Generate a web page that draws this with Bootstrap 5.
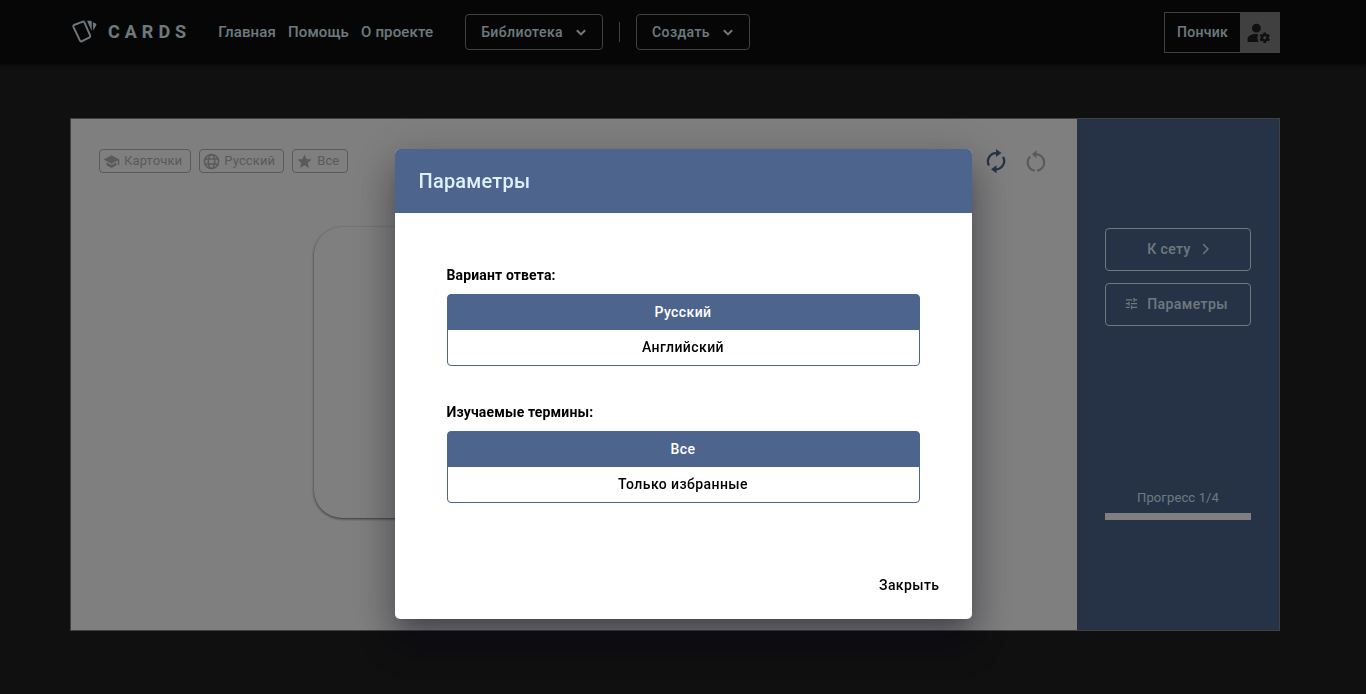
<!DOCTYPE html>
<html lang="ru">
<head>
<meta charset="utf-8">
<meta name="viewport" content="width=device-width, initial-scale=1">
<title>Cards</title>
<link href="https://cdn.jsdelivr.net/npm/bootstrap@5.3.0/dist/css/bootstrap.min.css" rel="stylesheet">
<style>
  :root { --brand: #4d648d; --ice: #dcf1fb; --scrollbar: 16px; }
  body { font-family: Roboto, "Noto Sans", sans-serif; font-size: 14px; background: #202020; padding-right: var(--scrollbar); overflow: hidden; }
  svg { fill: currentColor; flex: none; display: block; }
  .topbar { min-height: 64px; background: #0c0c0c; margin-right: calc(-1 * var(--scrollbar)); padding: 0 86px 0 71px; box-shadow: 0 1px 3px #0008; }
  .brand-name { font-size: 18px; font-weight: 700; letter-spacing: 5px; line-height: 24px; margin-left: 11px; }
  .topbar, .topbar a, .topbar .btn { color: var(--ice); }
  .main-links { gap: 12px; margin: 0 32px 0 27px; }
  .topbar .nav-link { font-size: 15px; font-weight: 500; line-height: 24px; padding: 0; letter-spacing: .01em; }
  .btn { --bs-btn-font-size: 14px; --bs-btn-font-weight: 500; --bs-btn-border-radius: 4px; letter-spacing: .03em; line-height: 20px; }
  .drop { height: 36px; border-color: #808080; padding: 0 12px 0 15px; gap: 9px; }
  .rule { width: 1px; height: 20px; background: #808080; margin: 0 16px; }
  .account { height: 41px; border: 1px solid #808080; font-weight: 500; letter-spacing: .02em; }
  .account-name { padding: 0 12px; }
  .account-tile { width: 39px; background: #808080; color: #202020; padding-left: 6px; }
  .study { margin: 54px 0 0 70px; max-width: 1210px; min-height: 513px; border: 1px solid #808080; border-radius: 0; background: #fff; }
  .board { padding: 30px 29px 28px 28px; }
  .chip { height: 24px; border: 1px solid #b4b4b4; border-radius: 4px; color: #b4b4b4; font-size: 13px; padding: 0 8px 0 3px; gap: 4px; letter-spacing: .01em; }
  .icon-btn { border: 0; background: none; padding: 0; color: #b4b4b4; }
  .icon-btn.enabled { color: var(--brand); }
  .flashcard { width: 520px; height: 291px; border-radius: 28px; box-shadow: 0 1px 3px #0009; margin: 54px auto 0; }
  .side { width: 202px; background: var(--brand); color: var(--ice); padding: 109px 28px 110px; gap: 12px; }
  .side .btn { color: var(--ice); border-color: var(--ice); height: 43px; padding-bottom: 8px; }
  .to-set { gap: 12px; }
  .meter { height: 7px; --bs-progress-bg: #fff; border-radius: 0; }
  .meter-label { font-size: 13px; line-height: 20px; margin-bottom: 5px; letter-spacing: .01em; }
  .modal-dialog { max-width: 577px; margin-top: 149px; }
  .modal-content { border: 0; border-radius: 5px; box-shadow: 0 11px 15px -7px #0003, 0 24px 38px 3px #0024, 0 9px 46px 8px #0002; }
  .modal-header { background: var(--brand); color: var(--ice); border: 0; padding: 16px 24px; border-radius: 5px 5px 0 0; }
  .modal-title { font-size: 20px; font-weight: 500; line-height: 32px; letter-spacing: .01em; }
  .modal-body { padding: 52px 52px 0; color: #000; }
  .group-label { font-size: 14px; font-weight: 700; line-height: 20px; margin-bottom: 9px; letter-spacing: .01em; }
  .choices { margin-bottom: 36px; }
  .choices .btn { --bs-btn-color: #000; --bs-btn-border-color: var(--brand); --bs-btn-active-bg: var(--brand); --bs-btn-active-border-color: var(--brand); --bs-btn-active-color: #fff; padding: 7px; }
  .choices .btn:last-child { padding-bottom: 8px; }
  .modal-footer { border: 0; padding: 29px 24px 17px; }
  .modal-footer .btn { color: #000; padding: 7px 8px; margin: 0; }
</style>
</head>
<body>
<header class="topbar d-flex align-items-center">
  <a href="#" class="d-flex align-items-center text-decoration-none">
    <svg width="26" height="26" viewBox="0 0 26 26"><path d="M3 6 L11.800 2.600 Q12.900 2.300 13.400 3.300 L19.200 16.600 Q19.500 17.800 18.500 18.400 L10.600 22.400 Q9.500 22.800 9 21.700 L2.300 7.600 Q2 6.500 3 6Z" fill="none" stroke="currentColor" stroke-width="1.900"/><path d="M16 1.700h3.700q1 0 1 1V12zM21.800 3.300l3 1.200q.9.500.5 1.500l-3 5.500z"/></svg>
    <span class="brand-name">CARDS</span>
  </a>
  <nav class="nav main-links">
    <a class="nav-link" href="#">Главная</a>
    <a class="nav-link" href="#">Помощь</a>
    <a class="nav-link" href="#">О проекте</a>
  </nav>
  <button type="button" class="btn drop d-flex align-items-center">Библиотека <svg width="18" height="18" viewBox="0 0 24 24"><path d="M7.410 8.580 12 13.170l4.590-4.590L18.500 10.500l-6.500 6.500-6.500-6.500z"/></svg></button>
  <span class="rule"></span>
  <button type="button" class="btn drop d-flex align-items-center">Создать <svg width="18" height="18" viewBox="0 0 24 24"><path d="M7.410 8.580 12 13.170l4.590-4.590L18.500 10.500l-6.500 6.500-6.500-6.500z"/></svg></button>
  <a href="#" class="account d-flex align-items-stretch ms-auto text-decoration-none">
    <span class="account-name align-self-center">Пончик</span>
    <span class="account-tile d-flex align-items-center"><svg width="25" height="25" viewBox="0 0 24 24"><path d="M10 3.500A4.300 4.300 0 0 0 10 12.100A4.300 4.300 0 0 0 10 3.500M17 12C16.870 12 16.760 12.090 16.740 12.210L16.550 13.530C16.250 13.660 15.960 13.820 15.700 14L14.460 13.500C14.350 13.500 14.220 13.500 14.150 13.630L13.150 15.360C13.090 15.470 13.110 15.600 13.210 15.680L14.270 16.500V17.500L13.210 18.320C13.120 18.400 13.090 18.530 13.150 18.640L14.150 20.370C14.210 20.500 14.340 20.500 14.460 20.500L15.700 20C15.960 20.180 16.240 20.350 16.550 20.470L16.740 21.790C16.760 21.910 16.860 22 17 22H19C19.110 22 19.220 21.910 19.240 21.790L19.430 20.470C19.730 20.340 20 20.180 20.270 20L21.500 20.500C21.630 20.500 21.760 20.500 21.830 20.370L22.830 18.640C22.890 18.530 22.860 18.400 22.770 18.320L21.700 17.500V16.500L22.760 15.680C22.850 15.600 22.880 15.470 22.820 15.360L21.820 13.630C21.760 13.500 21.630 13.500 21.500 13.500L20.270 14C20 13.820 19.730 13.650 19.420 13.530L19.230 12.210C19.220 12.090 19.110 12 19 12H17M10 13.500C5.580 13.500 1.500 15.500 1.500 18V21H12.200A7 7 0 0 1 11 17A7 7 0 0 1 11.800 13.600C11.110 13.530 10.560 13.500 10 13.500M18 15.500C18.830 15.500 19.500 16.170 19.500 17S18.830 18.500 18 18.500 16.500 17.830 16.500 17 17.170 15.500 18 15.500Z"/></svg></span>
  </a>
</header>

<main class="study card flex-row">
  <section class="board flex-grow-1">
    <div class="d-flex align-items-center">
      <div class="d-flex gap-2">
        <span class="chip d-flex align-items-center"><svg width="17" height="17" viewBox="0 0 24 24"><path d="M12 3 1 9l11 6 9-4.910V17h2V9M5 13.180v4L12 21l7-3.820v-4L12 17z"/></svg>Карточки</span>
        <span class="chip d-flex align-items-center"><svg width="17" height="17" viewBox="0 0 24 24"><g fill="none" stroke="currentColor" stroke-width="2.200"><circle cx="12" cy="12" r="10"/><ellipse cx="12" cy="12" rx="4.500" ry="10"/><path d="M3 8.500h18M3 15.500h18"/></g></svg>Русский</span>
        <span class="chip d-flex align-items-center"><svg width="17" height="17" viewBox="0 0 24 24"><path d="M12 17.270 18.180 21l-1.640-7.030L22 9.240l-7.190-.62L12 2 9.190 8.620 2 9.240l5.450 4.730L5.820 21z"/></svg>Все</span>
      </div>
      <div class="d-flex gap-3 ms-auto">
        <button type="button" class="icon-btn enabled" aria-label="Перемешать"><svg width="24" height="24" viewBox="0 0 24 24"><path d="M5 16.500A8.300 8.300 0 0 1 12 4.100M19 7.800A8.300 8.300 0 0 1 12 20.300" fill="none" stroke="currentColor" stroke-width="2.300"/><path d="M12 0l5.500 4.100-5.500 4zM12.500 16.200 7 20.300l5.500 4z"/></svg></button>
        <button type="button" class="icon-btn" aria-label="Сбросить"><svg width="24" height="24" viewBox="0 0 24 24"><path d="M12 5.200A8.300 8.300 0 0 1 13.200 21.700M10.800 21.700A8.300 8.300 0 0 1 6.300 7.500" fill="none" stroke="currentColor" stroke-width="2.200"/><path d="M12.500 1.300 7.800 5.200l4.700 4z"/></svg></button>
      </div>
    </div>
    <div class="flashcard"></div>
  </section>
  <aside class="side d-flex flex-column">
    <a href="#" class="btn to-set d-flex align-items-center justify-content-center">К сету <svg width="6" height="12" viewBox="0 0 6 12"><path d="m0 1 5 5-5 5" fill="none" stroke="currentColor" stroke-width="1.500"/></svg></a>
    <button type="button" class="btn d-flex align-items-center justify-content-center gap-2 pe-3"><svg width="15" height="15" viewBox="0 0 24 24"><path d="M3 17v2h6v-2H3M3 5v2h10V5H3m10 16v-2h8v-2h-8v-2h-2v6h2M7 9v2H3v2h4v2h2V9H7m14 4v-2H11v2h10m-6-4h2V7h4V5h-4V3h-2v6z"/></svg>Параметры</button>
    <div class="mt-auto">
      <div class="meter-label text-center">Прогресс 1/4</div>
      <div class="meter progress" role="progressbar" aria-label="Прогресс" aria-valuenow="1" aria-valuemin="0" aria-valuemax="4"></div>
    </div>
  </aside>
</main>

<div class="modal-backdrop show"></div>
<div class="modal show d-block" tabindex="-1" role="dialog" aria-labelledby="dialogTitle">
  <div class="modal-dialog">
    <div class="modal-content">
      <div class="modal-header"><h1 class="modal-title" id="dialogTitle">Параметры</h1></div>
      <div class="modal-body">
        <div class="group-label" id="answerLabel">Вариант ответа:</div>
        <div class="choices btn-group-vertical w-100" role="group" aria-labelledby="answerLabel">
          <button type="button" class="btn active">Русский</button>
          <button type="button" class="btn">Английский</button>
        </div>
        <div class="group-label" id="termsLabel">Изучаемые термины:</div>
        <div class="choices btn-group-vertical w-100" role="group" aria-labelledby="termsLabel">
          <button type="button" class="btn active">Все</button>
          <button type="button" class="btn">Только избранные</button>
        </div>
      </div>
      <div class="modal-footer"><button type="button" class="btn border-0">Закрыть</button></div>
    </div>
  </div>
</div>
<script src="https://cdn.jsdelivr.net/npm/bootstrap@5.3.0/dist/js/bootstrap.bundle.min.js"></script>
</body>
</html>
